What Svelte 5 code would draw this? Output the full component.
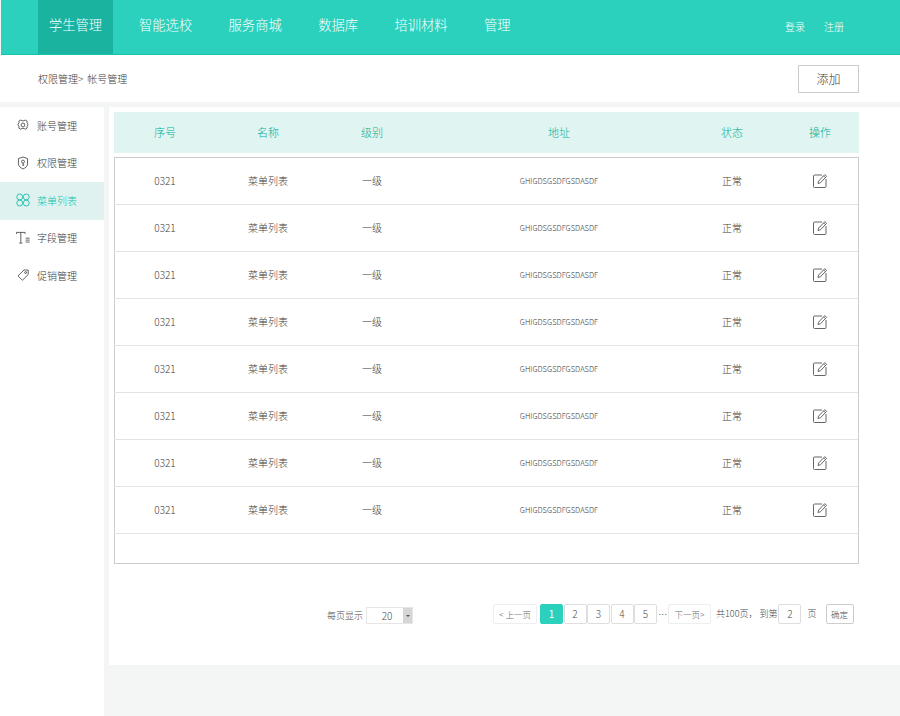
<script>
  const navs = ['学生管理', '智能选校', '服务商城', '数据库', '培训材料', '管理'];
  const side = [
    { t: '账号管理', i: 'gear' },
    { t: '权限管理', i: 'shield' },
    { t: '菜单列表', i: 'clover', on: true },
    { t: '字段管理', i: 'type' },
    { t: '促销管理', i: 'tag' }
  ];
  const heads = ['序号', '名称', '级别', '地址', '状态', '操作'];
  const rows = Array.from({ length: 8 });
</script>

<div class="page">
  <header class="top">
    <nav class="nav">
      {#each navs as n, i}
        <span class="nav-item" class:active={i === 0}>{n}</span>
      {/each}
    </nav>
    <div class="auth"><span>登录</span><span>注册</span></div>
  </header>

  <div class="crumbs">
    <span class="crumb-text">权限管理&gt;<span class="crumb-last">帐号管理</span></span>
    <button class="add">添加</button>
  </div>

  <div class="body">
    <aside class="side">
      {#each side as s}
        <div class="side-item" class:on={s.on}>
          <svg class="ico" viewBox="0 0 16 16" fill="none" stroke="currentColor" stroke-width="0.9">
            {#if s.i === 'gear'}
              <path d="M5.6 2.2l1.2 1h2.4l1.2-1 2.4 1.4-.3 1.5 1.2 2-.1.9-1.1 2 .3 1.5-2.4 1.4-1.2-1H6.8l-1.2 1-2.4-1.4.3-1.5-1.1-2-.1-.9 1.2-2-.3-1.5z" />
              <circle cx="8" cy="8" r="2.2" />
            {:else if s.i === 'shield'}
              <path d="M8 1.2l5.2 1.7v6.2c0 2.7-2.7 4.6-5.2 5.7-2.5-1.1-5.2-3-5.2-5.7V2.9z" />
              <circle cx="8" cy="6.4" r="1.7" />
              <path d="M8 8.1v3.4M8 10.2h1.4" />
            {:else if s.i === 'clover'}
              <g stroke-width="1">
                <rect x="1" y="1.2" width="6.6" height="6.6" rx="3.1" />
                <rect x="8.4" y="1.2" width="6.6" height="6.6" rx="3.1" />
                <rect x="1" y="8.2" width="6.6" height="6.6" rx="3.1" />
                <rect x="8.4" y="8.2" width="6.6" height="6.6" rx="3.1" />
              </g>
            {:else if s.i === 'type'}
              <path d="M.6 3.4V1.6h9.8v1.8M5.5 1.6v12M3.6 13.8h3.8" />
              <path d="M11 8.2h4.6M11 10.4h4.6M11 12.6h4.6" />
            {:else}
              <path d="M9.2 2.2l4.8.2-.1 5.2-6.6 6.4-5-5z" />
              <circle cx="11" cy="5.2" r="1.1" />
            {/if}
          </svg>
          <span>{s.t}</span>
        </div>
      {/each}
    </aside>

    <main class="main">
      <div class="panel">
        <div class="grid thead">
          {#each heads as h, i}<div class:last={i === 5}>{h}</div>{/each}
        </div>
        <div class="tbox">
          {#each rows as _}
            <div class="grid row">
              <div>0321</div>
              <div>菜单列表</div>
              <div>一级</div>
              <div class="addr">GHIGDSGSDFGSDASDF</div>
              <div>正常</div>
              <div class="edit last">
                <svg viewBox="0 0 16 16" width="16" height="16" fill="none" stroke="#666" stroke-width="1">
                  <path d="M10 2H2.5q-1 0-1 1v10.5q0 1 1 1H13q1 0 1-1V6" />
                  <path d="M6 10.5l.6-2.4L12.8 1.6l1.8 1.8-6.2 6.4zM11.6 2.9l1.8 1.8" />
                </svg>
              </div>
            </div>
          {/each}
        </div>

        <div class="pager">
          <span class="lbl">每页显示</span>
          <span class="size"><span class="size-n">20</span><span class="size-b"></span></span>
          <span class="pbtn wide first">&lt; 上一页</span>
          <span class="pbtn num cur">1</span>
          <span class="pbtn num">2</span>
          <span class="pbtn num">3</span>
          <span class="pbtn num">4</span>
          <span class="pbtn num">5</span>
          <span class="dots">···</span>
          <span class="pbtn wide next">下一页&gt;</span>
          <span class="total">共100页，</span>
          <span class="goto">到第</span>
          <span class="pbtn num jump">2</span>
          <span class="goto pg">页</span>
          <span class="pbtn ok">确定</span>
        </div>
      </div>
    </main>
  </div>
</div>

<style>
  :global(body) {
    margin: 0;
    background: #f4f6f6;
  }
  .page {
    width: 900px;
    height: 716px;
    display: flex;
    flex-direction: column;
    overflow: hidden;
    font-family: "Noto Sans CJK SC", "Open Sans", sans-serif;
    font-weight: 300;
    color: #3a3a3a;
  }
  .top {
    height: 54px;
    margin-left: 1px;
    background: #2bd1bd;
    border-bottom: 1px solid #16c4ae;
    display: flex;
    justify-content: space-between;
    flex: none;
  }
  .nav {
    display: flex;
    padding-left: 37px;
  }
  .nav-item {
    height: 54px;
    line-height: 50px;
    color: #fff;
    font-size: 13.3px;
    margin-right: 36.4px;
    white-space: nowrap;
  }
  .nav-item:first-child {
    width: 75px;
    margin-right: 26px;
    text-align: center;
    background: #1ab3a0;
  }
  .auth {
    display: flex;
    gap: 19px;
    padding: 19px 56px 0 0;
    color: #fff;
    font-size: 10px;
    line-height: 16px;
  }
  .crumbs {
    height: 47px;
    flex: none;
    background: #fff;
    display: flex;
    align-items: center;
    justify-content: space-between;
    padding: 0 41px 0 38px;
    margin-bottom: 5px;
    box-sizing: border-box;
  }
  .crumb-text {
    font-size: 10px;
    margin-bottom: 1px;
  }
  .crumb-last {
    margin-left: 4px;
  }
  .add {
    width: 61px;
    height: 28px;
    background: #fff;
    border: 1px solid #ccc;
    padding: 0 0 2px;
    font: inherit;
    font-size: 12px;
    color: #3a3a3a;
    margin-top: 1px;
  }
  .body {
    flex: 1;
    display: flex;
    gap: 5px;
    min-height: 0;
  }
  .side {
    width: 104px;
    flex: none;
    background: #fff;
  }
  .side-item {
    height: 37.5px;
    box-sizing: border-box;
    padding: 0 0 1px 16px;
    display: flex;
    align-items: center;
    gap: 7px;
    font-size: 10px;
    color: #3a3a3a;
  }
  .side-item.on {
    background: #dff2ef;
    color: #14bfaa;
  }
  .ico {
    width: 14px;
    height: 14px;
    flex: none;
  }
  .main {
    flex: 1;
    height: 558px;
    background: #fff;
    padding: 5px 41px 0 5px;
    box-sizing: border-box;
  }
  .grid {
    display: grid;
    grid-template-columns: 102px 104px 104px 270px 76px 1fr;
    text-align: center;
    align-items: center;
  }
  .last {
    padding-left: 11px;
  }
  .thead {
    height: 41px;
    box-sizing: border-box;
    padding-bottom: 2px;
    background: #e0f5f1;
    color: #08ad98;
    font-size: 11px;
    margin-bottom: 4px;
  }
  .tbox {
    height: 407px;
    box-sizing: border-box;
    border: 1px solid #ccc;
  }
  .row {
    height: 47px;
    box-sizing: border-box;
    padding-bottom: 2px;
    border-bottom: 1px solid #e4e4e4;
    font-size: 10px;
    margin-left: -1px;
  }
  .addr {
    font-size: 7.6px;
  }
  .edit {
    display: flex;
    justify-content: center;
    padding-top: 2px;
  }
  .pager {
    display: flex;
    align-items: flex-start;
    margin-top: 40px;
    padding-left: 213px;
    height: 20px;
    font-size: 9px;
    line-height: 20px;
    color: #4a4a4a;
  }
  .lbl {
    margin: 2px 3px 0 0;
    white-space: nowrap;
  }
  .size {
    width: 47px;
    height: 17px;
    margin: 3px 80px 0 0;
    border: 1px solid #e6e6e6;
    box-sizing: border-box;
    display: flex;
    font-size: 10px;
  }
  .size-n {
    flex: 1;
    text-align: center;
    line-height: 15px;
    padding-left: 4px;
  }
  .size-b {
    width: 9px;
    background: #d6d6d6;
    position: relative;
  }
  .size-b::after {
    content: "";
    position: absolute;
    left: 3px;
    top: 7px;
    border: 2px solid transparent;
    border-top: 2px solid #555;
    border-bottom: 0;
  }
  .pbtn {
    height: 20px;
    box-sizing: border-box;
    border: 1px solid #dedede;
    border-radius: 2px;
    display: flex;
    align-items: center;
    justify-content: center;
    white-space: nowrap;
    background: #fff;
    flex: none;
  }
  .wide {
    border-color: #eee;
    color: #666;
    font-size: 8.5px;
  }
  .first {
    width: 44px;
    margin-right: 3px;
  }
  .next {
    width: 43px;
    margin-right: 5px;
  }
  .num {
    width: 23px;
    margin-right: 0.5px;
    font-size: 10px;
  }
  .cur {
    background: #2bd1bd;
    border-color: #2bd1bd;
    color: #fff;
    font-weight: 400;
  }
  .dots {
    width: 10.5px;
    flex: none;
    font-family: "Liberation Sans", sans-serif;
    white-space: nowrap;
    text-align: center;
  }
  .total, .goto {
    white-space: nowrap;
    flex: none;
  }
  .total {
    margin-right: 2px;
  }
  .jump {
    margin-left: 1px;
    margin-right: 0;
  }
  .pg {
    margin: 0 9px 0 6px;
  }
  .ok {
    width: 28px;
    font-size: 8.5px;
    border-color: #ccc;
  }
</style>
